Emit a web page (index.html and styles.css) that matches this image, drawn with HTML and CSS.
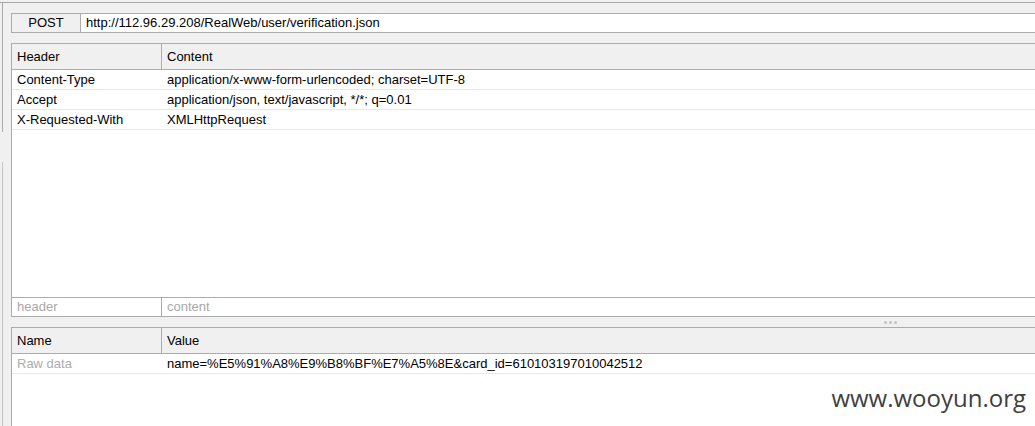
FILE: index.html
```html
<!DOCTYPE html>
<html>
<head>
<meta charset="utf-8">
<link rel="stylesheet" href="styles.css">
</head>
<body>
<div class="frame">
  <div class="rail">
    <div class="rail-top"></div>
    <div class="rail-gap"></div>
    <div class="rail-bottom"></div>
  </div>
  <div class="main">
    <div class="request-line">
      <div class="method">POST</div>
      <div class="url">http://112.96.29.208/RealWeb/user/verification.json</div>
    </div>
    <div class="table headers">
      <div class="row head"><div class="c1">Header</div><div class="c2">Content</div></div>
      <div class="row item"><div class="c1">Content-Type</div><div class="c2">application/x-www-form-urlencoded; charset=UTF-8</div></div>
      <div class="row item"><div class="c1">Accept</div><div class="c2">application/json, text/javascript, */*; q=0.01</div></div>
      <div class="row item"><div class="c1">X-Requested-With</div><div class="c2">XMLHttpRequest</div></div>
      <div class="filler"></div>
      <div class="row new"><div class="c1">header</div><div class="c2">content</div></div>
    </div>
    <div class="splitter"><span class="dot"></span><span class="dot"></span><span class="dot"></span></div>
    <div class="table params">
      <div class="row head"><div class="c1">Name</div><div class="c2">Value</div></div>
      <div class="row item"><div class="c1 muted">Raw data</div><div class="c2">name=%E5%91%A8%E9%B8%BF%E7%A5%8E&amp;card_id=610103197010042512</div></div>
      <div class="filler"></div>
      <div class="watermark">www.wooyun.org</div>
    </div>
  </div>
</div>
</body>
</html>
```

FILE: styles.css
```css
* { box-sizing: border-box; }
html, body {
  margin: 0;
  padding: 0;
  background: #f0f0f0;
  overflow: hidden;
}
body {
  width: 1035px;
  height: 426px;
  font-family: "Liberation Sans", Arial, sans-serif;
  font-size: 13px;
  color: #000;
}
.frame {
  margin-top: 2px;
  height: 424px;
  border-top: 1px solid #a8a8a8;
  display: flex;
}
.rail {
  margin-left: 2px;
  width: 1px;
  display: flex;
  flex-direction: column;
}
.rail-top { height: 129px; background: #a8a8a8; }
.rail-gap { height: 30px; }
.rail-bottom { flex: 1; background: #c4c4c4; }
.main {
  flex: 1;
  min-width: 0;
  padding: 10px 0 0 8px;
  display: flex;
  flex-direction: column;
}
.request-line {
  display: flex;
  height: 20px;
  border: 1px solid #acacac;
  border-right: none;
  line-height: 18px;
  margin-bottom: 10px;
}
.method {
  width: 69px;
  border-right: 1px solid #acacac;
  text-align: center;
}
.url {
  flex: 1;
  background: #fff;
  padding-left: 5px;
  white-space: nowrap;
}
.table {
  display: flex;
  flex-direction: column;
  border-left: 1px solid #acacac;
  background: #fff;
}
.headers {
  height: 274px;
  border-bottom: 1px solid #acacac;
}
.params {
  flex: 1;
  position: relative;
}
.row { display: flex; white-space: nowrap; }
.c1 {
  width: 150px;
  padding-left: 5px;
  border-right: 1px solid transparent;
}
.c2 { flex: 1; padding-left: 5px; }
.head {
  background: #f0f0f0;
  border-top: 1px solid #acacac;
  border-bottom: 1px solid #acacac;
  line-height: 25px;
  height: 27px;
}
.head .c1 { border-right-color: #acacac; }
.item {
  height: 20px;
  line-height: 19px;
  border-bottom: 1px solid #e8e8e8;
}
.filler { flex: 1; }
.new {
  height: 19px;
  line-height: 18px;
  border-top: 1px solid #acacac;
  color: #a8a8a8;
}
.new .c1 { border-right-color: #acacac; }
.muted { color: #acacac; }
.splitter {
  height: 10px;
  display: flex;
  align-items: center;
  justify-content: center;
  gap: 2px;
  padding-left: 735px;
}
.dot {
  width: 3px;
  height: 3px;
  border-radius: 50%;
  background: #c2c2c2;
}
.watermark {
  position: absolute;
  right: 9px;
  bottom: 14px;
  font-family: "Open Sans", "Noto Sans", sans-serif;
  font-size: 24px;
  line-height: 28px;
  color: #404040;
}
```
